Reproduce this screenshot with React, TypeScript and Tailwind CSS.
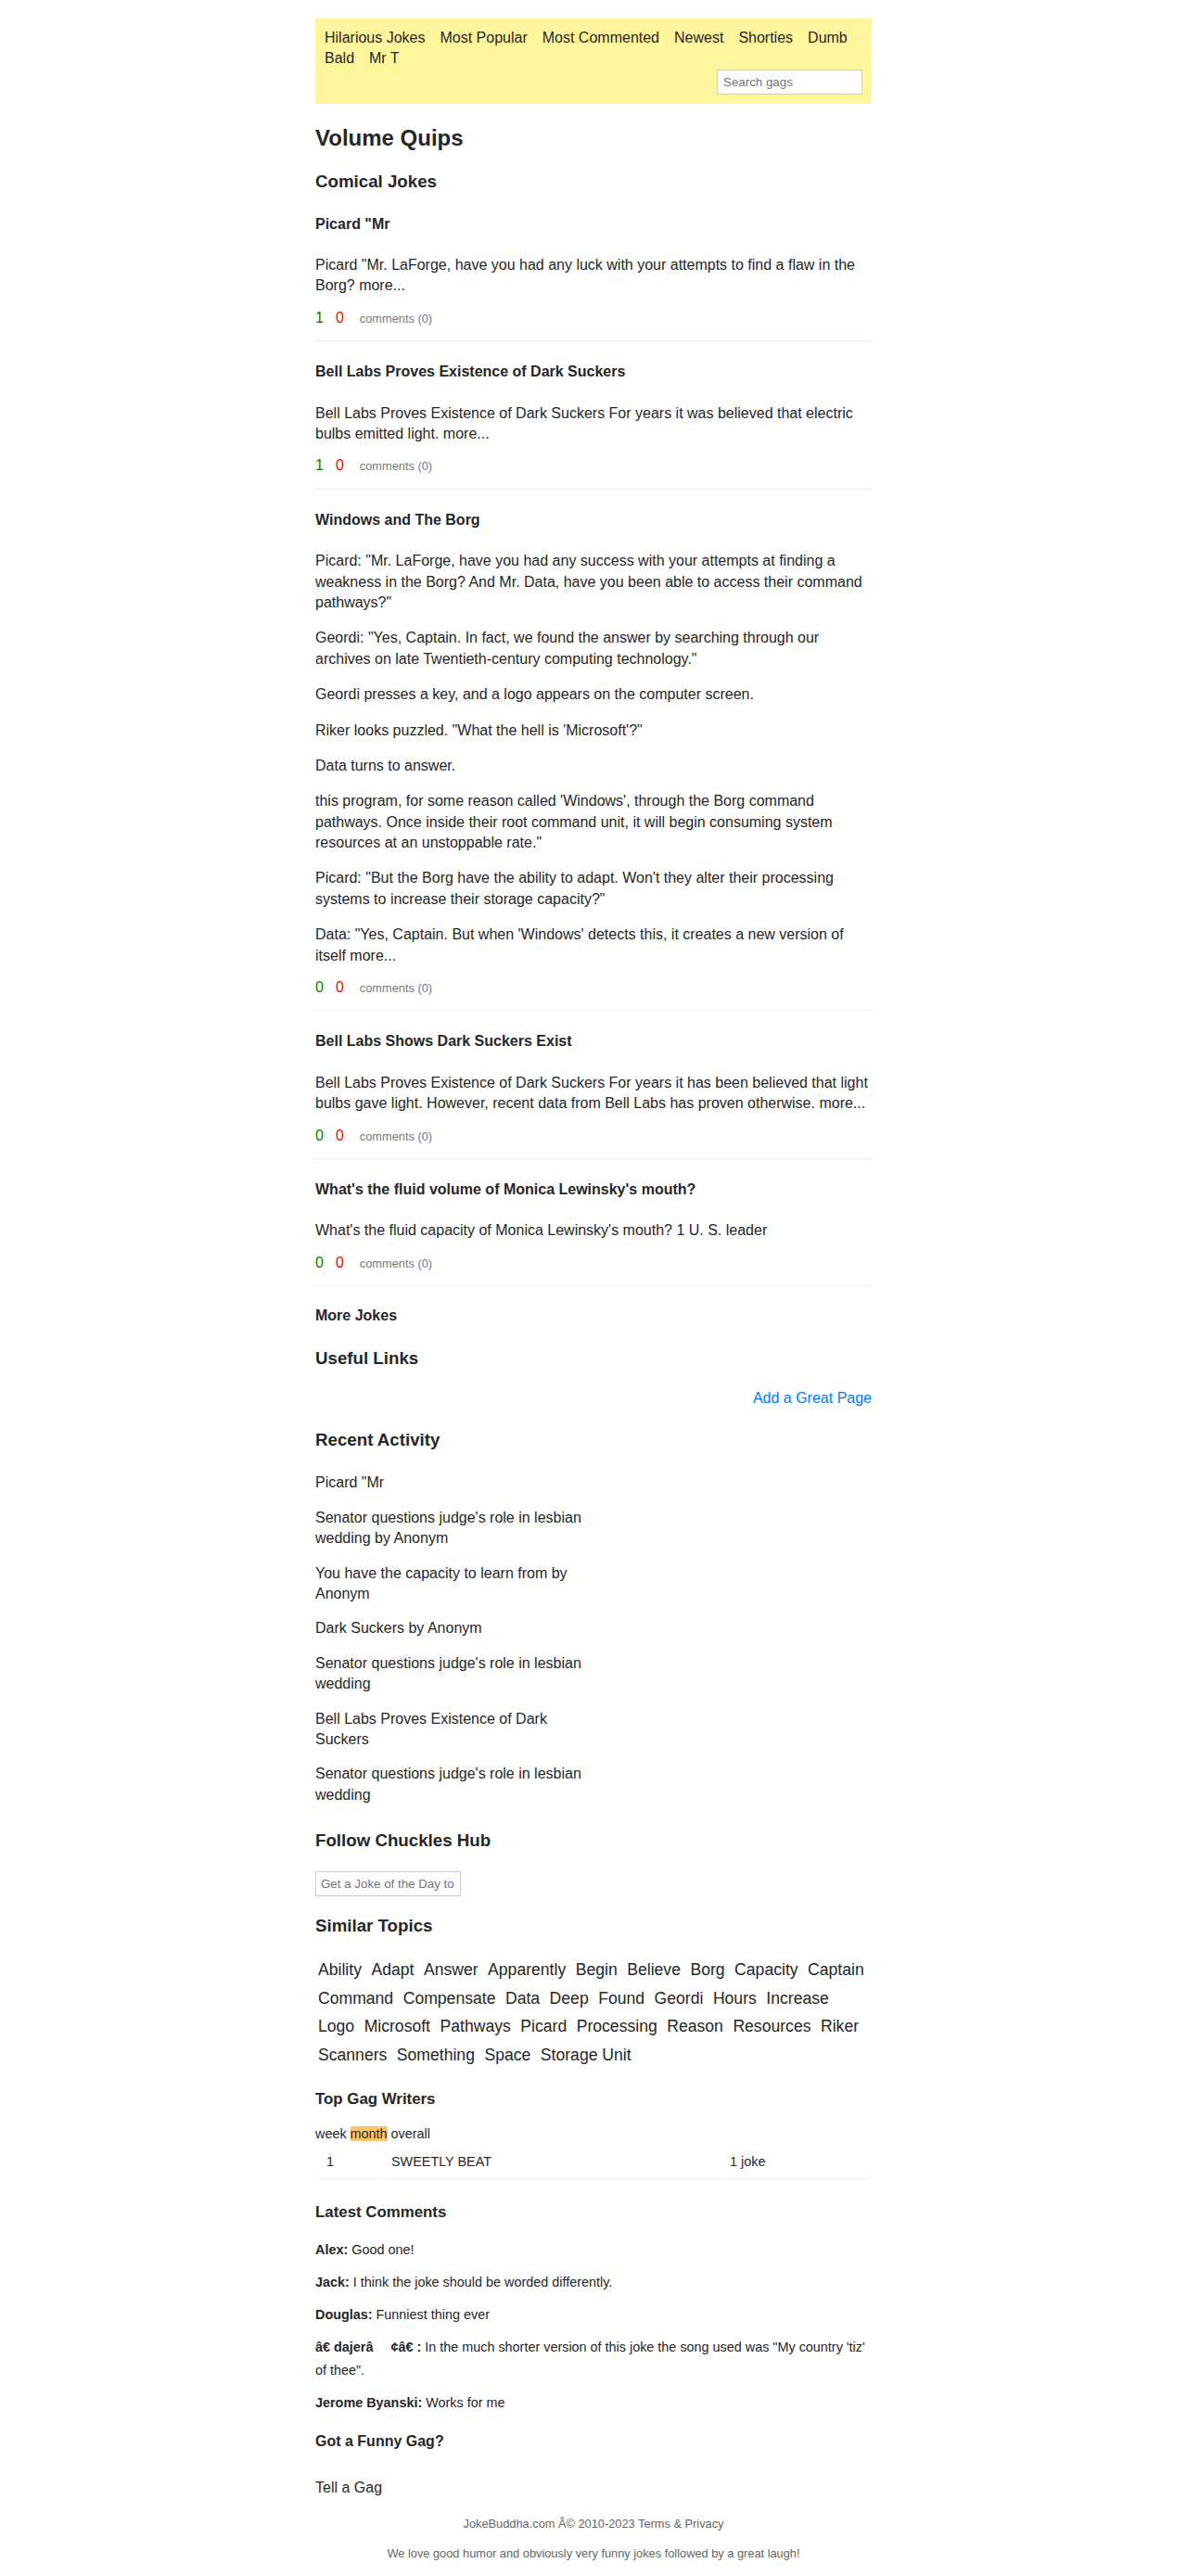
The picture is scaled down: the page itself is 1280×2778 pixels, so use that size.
import React from "react";

interface Joke {
  title: string;
  paras: string[];
  up: number;
  down: number;
}

const navLinks = ["Hilarious Jokes", "Most Popular", "Most Commented", "Newest", "Shorties", "Dumb", "Bald", "Mr T"];

const jokes: Joke[] = [
  {
    title: 'Picard "Mr',
    paras: ['Picard "Mr. LaForge, have you had any luck with your attempts to find a flaw in the Borg? more...'],
    up: 1,
    down: 0,
  },
  {
    title: "Bell Labs Proves Existence of Dark Suckers",
    paras: [
      "Bell Labs Proves Existence of Dark Suckers For years it was believed that electric bulbs emitted light. more...",
    ],
    up: 1,
    down: 0,
  },
  {
    title: "Windows and The Borg",
    paras: [
      'Picard: "Mr. LaForge, have you had any success with your attempts at finding a weakness in the Borg? And Mr. Data, have you been able to access their command pathways?"',
      'Geordi: "Yes, Captain. In fact, we found the answer by searching through our archives on late Twentieth-century computing technology."',
      "Geordi presses a key, and a logo appears on the computer screen.",
      "Riker looks puzzled. \"What the hell is 'Microsoft'?\"",
      "Data turns to answer.",
      "this program, for some reason called 'Windows', through the Borg command pathways. Once inside their root command unit, it will begin consuming system resources at an unstoppable rate.\"",
      'Picard: "But the Borg have the ability to adapt. Won\'t they alter their processing systems to increase their storage capacity?"',
      "Data: \"Yes, Captain. But when 'Windows' detects this, it creates a new version of itself more...",
    ],
    up: 0,
    down: 0,
  },
  {
    title: "Bell Labs Shows Dark Suckers Exist",
    paras: [
      "Bell Labs Proves Existence of Dark Suckers For years it has been believed that light bulbs gave light. However, recent data from Bell Labs has proven otherwise. more...",
    ],
    up: 0,
    down: 0,
  },
  {
    title: "What's the fluid volume of Monica Lewinsky's mouth?",
    paras: ["What's the fluid capacity of Monica Lewinsky's mouth? 1 U. S. leader"],
    up: 0,
    down: 0,
  },
];

const recent = [
  'Picard "Mr',
  "Senator questions judge's role in lesbian wedding by Anonym",
  "You have the capacity to learn from by Anonym",
  "Dark Suckers by Anonym",
  "Senator questions judge's role in lesbian wedding",
  "Bell Labs Proves Existence of Dark Suckers",
  "Senator questions judge's role in lesbian wedding",
];

const topics = [
  "Ability", "Adapt", "Answer", "Apparently", "Begin", "Believe", "Borg", "Capacity", "Captain",
  "Command", "Compensate", "Data", "Deep", "Found", "Geordi", "Hours", "Increase",
  "Logo", "Microsoft", "Pathways", "Picard", "Processing", "Reason", "Resources", "Riker",
  "Scanners", "Something", "Space", "Storage Unit",
];

// names may come in two parts (garbled encoding shows a gap between them)
const comments = [
  { name: ["Alex:"], text: "Good one!" },
  { name: ["Jack:"], text: "I think the joke should be worded differently." },
  { name: ["Douglas:"], text: "Funniest thing ever" },
  { name: ["â€ dajerâ", "¢â€ :"], text: "In the much shorter version of this joke the song used was \"My country 'tiz' of thee\"." },
  { name: ["Jerome Byanski:"], text: "Works for me" },
];

const JokeItem: React.FC<{ joke: Joke; first: boolean }> = ({ joke, first }) => (
  <div className={first ? "mt-[21px] border-b border-[#eee] pb-[13px]" : "pt-[22px] border-b border-[#eee] pb-[13px]"}>
    <h4 className="text-[16px] font-bold leading-[22.4px] mb-[22px]">{joke.title}</h4>
    <div className="flex flex-col gap-[16px]">
      {joke.paras.map((p, i) => (
        <p key={i}>{p}</p>
      ))}
    </div>
    <div className="mt-[12px] flex items-baseline">
      <span className="text-[#008000] mr-[13px]">{joke.up}</span>
      <span className="text-[#ff0000] mr-[17px]">{joke.down}</span>
      <span className="text-[12.8px] text-[#777]">comments (0)</span>
    </div>
  </div>
);

export default function App() {
  return (
    <div className="bg-white font-['Liberation_Sans',Arial,sans-serif] text-[16px] leading-[1.4] text-[#262626]">
      <div className="mx-auto w-[600px] pt-[20px] pb-[17px]">
        <div className="bg-[#fff59d] p-[10px]">
          <nav className="flex flex-wrap gap-x-[16px] leading-[22.4px]">
            {navLinks.map((l) => (
              <a key={l}>{l}</a>
            ))}
          </nav>
          <div className="flex justify-end">
            <input
              placeholder="Search gags"
              className="h-[27px] w-[157px] border border-[#ccc] bg-white px-[6px] font-['Liberation_Sans',Arial,sans-serif] text-[13.33px] placeholder:text-[#757575] outline-none"
            />
          </div>
        </div>

        <h1 className="mt-[20px] text-[24px] font-bold leading-[33.6px]">Volume Quips</h1>
        <h3 className="mt-[18px] text-[18.72px] font-bold leading-[26.2px]">Comical Jokes</h3>

        {jokes.map((j, i) => (
          <JokeItem key={i} joke={j} first={i === 0} />
        ))}

        <h4 className="mt-[21px] text-[16px] font-bold leading-[22.4px]">More Jokes</h4>
        <h3 className="mt-[21px] text-[18.72px] font-bold leading-[26.2px]">Useful Links</h3>
        <div className="mt-[19px] text-right">
          <a className="text-[#007bff]">Add a Great Page</a>
        </div>

        <h3 className="mt-[21px] text-[18.72px] font-bold leading-[26.2px]">Recent Activity</h3>
        <div className="mt-[22px] w-[300px] flex flex-col gap-[15px]">
          {recent.map((r, i) => (
            <a key={i}>{r}</a>
          ))}
        </div>

        <h3 className="mt-[25px] text-[18.72px] font-bold leading-[26.2px]">Follow Chuckles Hub</h3>
        <input
          placeholder="Get a Joke of the Day to"
          className="mt-[20px] block h-[27px] w-[157px] border border-[#ccc] bg-white px-[5px] font-['Liberation_Sans',Arial,sans-serif] text-[13.33px] placeholder:text-[#757575] outline-none"
        />

        <h3 className="mt-[19px] text-[18.72px] font-bold leading-[26.2px]">Similar Topics</h3>
        <div className="mt-[19px] flex flex-wrap gap-x-[10.5px] pl-[3px] text-[17.6px] leading-[30.5px]">
          {topics.map((t) => (
            <a key={t}>{t}</a>
          ))}
        </div>

        <div className="text-[14.4px] leading-[20.16px]">
          <h3 className="mt-[21px] text-[16.85px] font-bold leading-[23.6px]">Top Gag Writers</h3>
          <div className="mt-[15px]">
            week <span className="bg-[#fcc56c]">month</span> overall
          </div>
          <table className="w-full border-separate border-spacing-[2px]">
            <tbody>
              <tr>
                <td className="w-[70px] border-b border-[#eee] px-[10px] py-[8px]">1</td>
                <td className="w-[363px] border-b border-[#eee] px-[8px] py-[8px]">SWEETLY BEAT</td>
                <td className="border-b border-[#eee] px-[8px] py-[8px]">1 joke</td>
              </tr>
            </tbody>
          </table>

          <h3 className="mt-[22px] text-[16.85px] font-bold leading-[23.6px]">Latest Comments</h3>
          <div className="mt-[16px] flex flex-col gap-[10px] leading-[25px]">
            {comments.map((c, i) => (
              <p key={i}>
                <b>{c.name[0]}</b>
                {c.name[1] && <b className="ml-[19px]">{c.name[1]}</b>} {c.text}
              </p>
            ))}
          </div>
        </div>

        <h4 className="mt-[18px] text-[16px] font-bold leading-[22.4px]">Got a Funny Gag?</h4>
        <div className="mt-[28px]">
          <a>Tell a Gag</a>
        </div>

        <footer className="mt-[18px] text-center text-[12.8px] leading-[17.9px] text-[#666]">
          <p>JokeBuddha.com Â© 2010-2023 Terms &amp; Privacy</p>
          <p className="mt-[14px]">We love good humor and obviously very funny jokes followed by a great laugh!</p>
        </footer>
      </div>
    </div>
  );
}
